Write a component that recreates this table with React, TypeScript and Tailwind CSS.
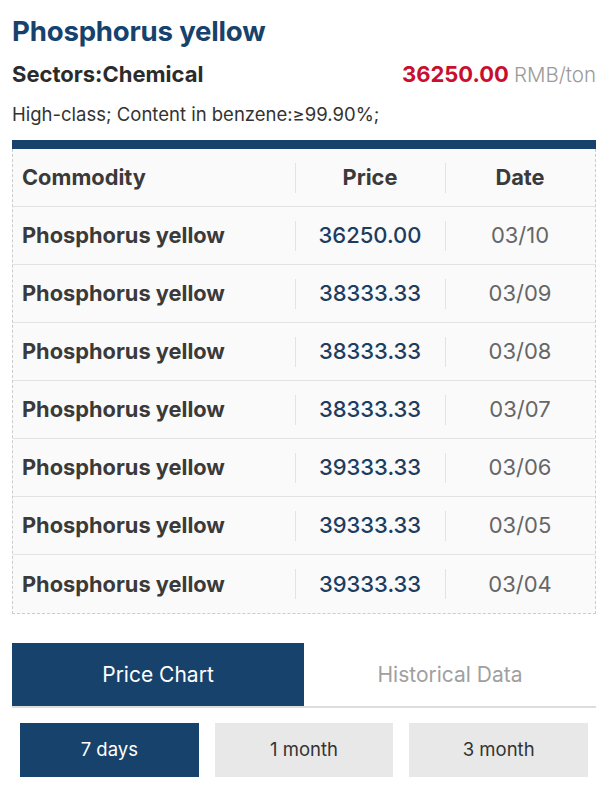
import React from "react";

const rows = [
  ["36250.00", "03/10"],
  ["38333.33", "03/09"],
  ["38333.33", "03/08"],
  ["38333.33", "03/07"],
  ["39333.33", "03/06"],
  ["39333.33", "03/05"],
  ["39333.33", "03/04"],
];

export default function App() {
  return (
    <div
      className="w-[600px] min-h-[800px] bg-white pl-3 pr-[4px]"
      style={{ fontFamily: "Inter, 'Liberation Sans', sans-serif" }}
    >
      <div className="h-[52px] flex items-start pt-[18px]">
        <h1 className="text-[27.6px] font-bold text-[#17426c] leading-none tracking-[-0.2px]">
          Phosphorus yellow
        </h1>
      </div>
      <div className="h-[44px] flex items-center justify-between">
        <span className="text-[22px] font-bold text-[#2b2b2b]">Sectors:Chemical</span>
        <span className="flex items-baseline gap-[5px]">
          <span className="text-[22px] font-bold text-[#c8102e]">36250.00</span>
          <span className="text-[20.5px] font-light text-[#9a9a9a]">RMB/ton</span>
        </span>
      </div>
      <div className="h-[36px] flex items-center pt-[1px]">
        <p className="text-[18.5px] text-[#333333]">High-class; Content in benzene:≥99.90%;</p>
      </div>
      <div className="mt-[8px] h-[9px] bg-[#17426c]" />
      <div className="border-x border-b border-dashed border-[#cccccc] bg-[#fafafa]">
        <div className="grid grid-cols-[1fr_150px_150px] h-[58px] border-b border-solid border-[#e3e3e3]">
          <div className="flex items-center pl-[9px] text-[21.8px] font-bold text-[#3a3a3a]">Commodity</div>
          <div className="flex items-center justify-center text-[21.8px] font-bold text-[#3a3a3a] relative">
            <span className="absolute left-0 top-[14px] h-[30px] w-px bg-[#e3e3e3]" />
            Price
          </div>
          <div className="flex items-center justify-center text-[21.8px] font-bold text-[#3a3a3a] relative">
            <span className="absolute left-0 top-[14px] h-[30px] w-px bg-[#e3e3e3]" />
            Date
          </div>
        </div>
        {rows.map(([p, d], i) => (
          <div
            key={i}
            className={
              "grid grid-cols-[1fr_150px_150px] h-[58px] " +
              (i < rows.length - 1 ? "border-b border-solid border-[#e3e3e3]" : "")
            }
          >
            <div className="flex items-center pl-[9px] text-[21.8px] font-bold text-[#3a3a3a]">
              Phosphorus yellow
            </div>
            <div className="flex items-center justify-center text-[22px] font-medium text-[#1c3d60] relative">
              <span className="absolute left-0 top-[14px] h-[30px] w-px bg-[#e3e3e3]" />
              {p}
            </div>
            <div className="flex items-center justify-center text-[22px] text-[#666666] relative">
              <span className="absolute left-0 top-[14px] h-[30px] w-px bg-[#e3e3e3]" />
              {d}
            </div>
          </div>
        ))}
      </div>
      <div className="mt-[29px] grid grid-cols-2 border-b-2 border-[#dddddd]">
        <div className="h-[63px] bg-[#17426c] text-white text-[21px] flex items-center justify-center">
          Price Chart
        </div>
        <div className="h-[63px] text-[#a0a0a0] text-[21px] flex items-center justify-center">
          Historical Data
        </div>
      </div>
      <div className="mt-[15px] px-2 grid grid-cols-3 gap-4">
        <div className="h-[54px] bg-[#17426c] text-white text-[18.5px] flex items-center justify-center">
          7 days
        </div>
        <div className="h-[54px] bg-[#e8e8e8] text-[#333333] text-[18.5px] flex items-center justify-center">
          1 month
        </div>
        <div className="h-[54px] bg-[#e8e8e8] text-[#333333] text-[18.5px] flex items-center justify-center">
          3 month
        </div>
      </div>
    </div>
  );
}
